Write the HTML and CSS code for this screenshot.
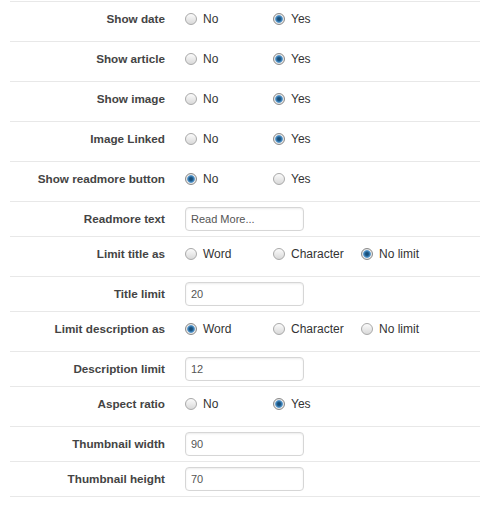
FILE: index.html
```html
<!DOCTYPE html>
<html>
<head>
<meta charset="utf-8">
<link rel="stylesheet" href="styles.css">
</head>
<body>
<div class="form">
  <div class="row">
    <div class="label">Show date</div>
    <div class="opts">
      <span class="opt"><span class="radio"></span>No</span>
      <span class="opt"><span class="radio on"></span>Yes</span>
    </div>
  </div>
  <div class="row">
    <div class="label">Show article</div>
    <div class="opts">
      <span class="opt"><span class="radio"></span>No</span>
      <span class="opt"><span class="radio on"></span>Yes</span>
    </div>
  </div>
  <div class="row">
    <div class="label">Show image</div>
    <div class="opts">
      <span class="opt"><span class="radio"></span>No</span>
      <span class="opt"><span class="radio on"></span>Yes</span>
    </div>
  </div>
  <div class="row">
    <div class="label">Image Linked</div>
    <div class="opts">
      <span class="opt"><span class="radio"></span>No</span>
      <span class="opt"><span class="radio on"></span>Yes</span>
    </div>
  </div>
  <div class="row">
    <div class="label">Show readmore button</div>
    <div class="opts">
      <span class="opt"><span class="radio on"></span>No</span>
      <span class="opt"><span class="radio"></span>Yes</span>
    </div>
  </div>
  <div class="row row-input">
    <div class="label">Readmore text</div>
    <div><input class="field" type="text" value="Read More..."></div>
  </div>
  <div class="row">
    <div class="label">Limit title as</div>
    <div class="opts">
      <span class="opt"><span class="radio"></span>Word</span>
      <span class="opt"><span class="radio"></span>Character</span>
      <span class="opt"><span class="radio on"></span>No limit</span>
    </div>
  </div>
  <div class="row row-input">
    <div class="label">Title limit</div>
    <div><input class="field" type="text" value="20"></div>
  </div>
  <div class="row">
    <div class="label">Limit description as</div>
    <div class="opts">
      <span class="opt"><span class="radio on"></span>Word</span>
      <span class="opt"><span class="radio"></span>Character</span>
      <span class="opt"><span class="radio"></span>No limit</span>
    </div>
  </div>
  <div class="row row-input">
    <div class="label">Description limit</div>
    <div><input class="field" type="text" value="12"></div>
  </div>
  <div class="row">
    <div class="label">Aspect ratio</div>
    <div class="opts">
      <span class="opt"><span class="radio"></span>No</span>
      <span class="opt"><span class="radio on"></span>Yes</span>
    </div>
  </div>
  <div class="row row-input">
    <div class="label">Thumbnail width</div>
    <div><input class="field" type="text" value="90"></div>
  </div>
  <div class="row row-input last">
    <div class="label">Thumbnail height</div>
    <div><input class="field" type="text" value="70"></div>
  </div>
</div>
</body>
</html>
```

FILE: styles.css
```css
html, body {
  margin: 0;
  padding: 0;
  background: #fff;
}
body {
  padding-top: 1px;
  font-family: "Liberation Sans", Arial, sans-serif;
  color: #333;
}
.form {
  margin-left: 10px;
  width: 470px;
}
.row {
  display: grid;
  grid-template-columns: 155px 1fr;
  column-gap: 20px;
  align-items: center;
  border-top: 1px solid #e8e8e8;
  padding: 8px 0 13px;
  line-height: 18px;
}
.row-input {
  padding: 5px 0;
}
.row.last {
  border-bottom: 1px solid #e8e8e8;
}
.label {
  text-align: right;
  font-weight: bold;
  font-size: 11.7px;
  color: #444;
}
.opts {
  display: flex;
  font-size: 12px;
  color: #333;
}
.opt {
  display: flex;
  align-items: center;
  width: 88px;
}
.radio {
  box-sizing: border-box;
  width: 12px;
  height: 12px;
  border-radius: 50%;
  border: 1px solid #a9a9a9;
  background: linear-gradient(#fbfbfb, #d9d9d9);
  margin-right: 6px;
  flex: none;
}
.radio.on {
  border-color: #8a8a8a;
  background: radial-gradient(circle at 50% 50%, #17476e 0, #1f5a88 1.8px, #4a90c8 3.2px, #6fa6d2 3.6px, #eaeaea 4.2px, #cfcfcf 100%);
}
.field {
  box-sizing: border-box;
  display: block;
  width: 119px;
  height: 24px;
  margin: 0;
  padding: 0 5px;
  border: 1px solid #d6d6d6;
  border-radius: 4px;
  box-shadow: inset 0 1px 2px rgba(0, 0, 0, 0.08);
  background: #fff;
  font-family: "Liberation Sans", Arial, sans-serif;
  font-size: 11px;
  color: #555;
  outline: none;
}
```
